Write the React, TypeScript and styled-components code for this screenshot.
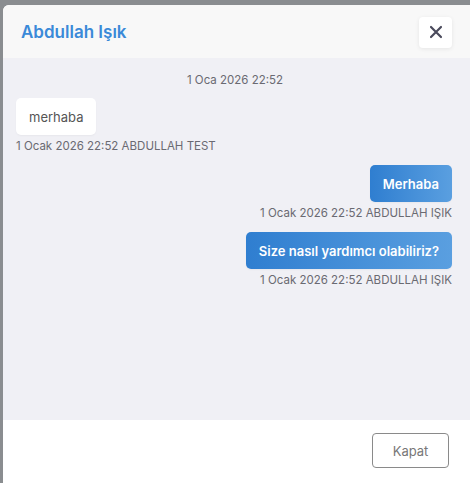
import React from 'react'
import styled, {createGlobalStyle} from 'styled-components'

const GlobalStyle = createGlobalStyle`
  html, body {
    margin: 0;
    padding: 0;
    background: #8a8d90;
    overflow: hidden;
    font-family: Inter, "Noto Sans", "Liberation Sans", sans-serif;
  }
`

const Backdrop = styled.div`
  width: 470px;
  height: 483px;
  overflow: hidden;
  padding: 5px 0 0 3px;
  box-sizing: border-box;
`

const Modal = styled.div`
  width: 500px;
  border-radius: 6px 6px 0 0;
  overflow: hidden;
  background: #fff;
  display: flex;
  flex-direction: column;
`

const Header = styled.div`
  height: 53px;
  background: #f8f8f8;
  display: flex;
  align-items: center;
  justify-content: space-between;
  padding: 0 51px 0 18px;
  box-sizing: border-box;
`

const Title = styled.h2`
  margin: 0;
  font-size: 17px;
  font-weight: 600;
  color: #3b8ad8;
`

const CloseButton = styled.button`
  width: 33px;
  height: 31px;
  border: none;
  border-radius: 4px;
  background: #fff;
  box-shadow: 0 1px 4px rgba(0,0,0,0.08);
  display: flex;
  align-items: center;
  justify-content: center;
  padding: 0;
  margin-top: 1px;
`

const Body = styled.div`
  height: 362px;
  background: #f0f0f5;
  padding: 15px 51px 0 13px;
  box-sizing: border-box;
  display: flex;
  flex-direction: column;
`

const DateLine = styled.div`
  text-align: center;
  font-size: 11.5px;
  color: #6a6a72;
  margin-bottom: 11px;
  padding-left: 2px;
`

const Message = styled.div<{mine?: boolean}>`
  display: flex;
  flex-direction: column;
  align-items: ${p => p.mine ? 'flex-end' : 'flex-start'};
  margin-bottom: 12px;
`

const Bubble = styled.div<{mine?: boolean}>`
  padding: 0 13px;
  height: 37px;
  display: flex;
  align-items: center;
  border-radius: 5px;
  font-size: 13px;
  font-weight: ${p => p.mine ? 600 : 400};
  color: ${p => p.mine ? '#fff' : '#555'};
  background: ${p => p.mine ? 'linear-gradient(90deg, #2f7ed0, #5a9fe0)' : '#fff'};
  box-shadow: 0 1px 2px rgba(0,0,0,0.04);
`

const Meta = styled.div`
  margin-top: 4px;
  font-size: 11.5px;
  color: #6a6a72;
`

const Footer = styled.div`
  height: 70px;
  background: #fff;
  display: flex;
  align-items: flex-start;
  padding: 13px 51px 0 0;
  justify-content: flex-end;
  box-sizing: border-box;
`

const KapatButton = styled.button`
  width: 77px;
  height: 35px;
  border: 1px solid #8a8a8a;
  border-radius: 4px;
  background: #fff;
  color: #777;
  font-family: inherit;
  font-size: 13px;
  margin-right: 3px;
`

const messages = [
  {mine: false, text: 'merhaba', meta: '1 Ocak 2026 22:52 ABDULLAH TEST'},
  {mine: true, text: 'Merhaba', meta: '1 Ocak 2026 22:52 ABDULLAH IŞIK'},
  {mine: true, text: 'Size nasıl yardımcı olabiliriz?', meta: '1 Ocak 2026 22:52 ABDULLAH IŞIK'},
]

const App = () => {
  return (
    <Backdrop>
      <GlobalStyle />
      <Modal>
        <Header>
          <Title>Abdullah Işık</Title>
          <CloseButton>
            <svg width="14" height="14" viewBox="0 0 14 14">
              <path d="M2 2 L12 12 M12 2 L2 12" stroke="#4a4a5c" strokeWidth="2.2" strokeLinecap="round" />
            </svg>
          </CloseButton>
        </Header>
        <Body>
          <DateLine>1 Oca 2026 22:52</DateLine>
          {messages.map((m, i) => (
            <Message key={i} mine={m.mine}>
              <Bubble mine={m.mine}>{m.text}</Bubble>
              <Meta>{m.meta}</Meta>
            </Message>
          ))}
        </Body>
        <Footer>
          <KapatButton>Kapat</KapatButton>
        </Footer>
      </Modal>
    </Backdrop>
  )
}

export default App
